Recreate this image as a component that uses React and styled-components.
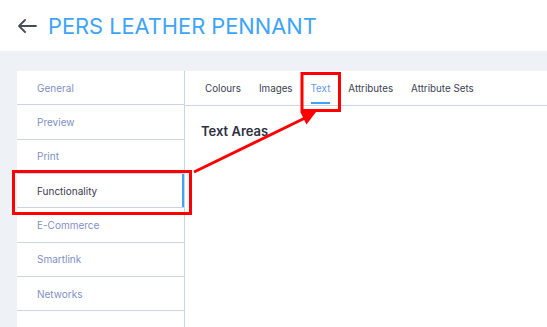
import styled, { createGlobalStyle } from 'styled-components';

const Global = createGlobalStyle`
  html, body { margin: 0; padding: 0; background: #eef1f5; }
  body { font-family: Inter, "Noto Sans", sans-serif; }
`;

const Page = styled.div`
  position: relative;
  width: 547px;
  height: 327px;
  overflow: hidden;
  background: #eef1f5;
`;

const Header = styled.header`
  height: 51px;
  background: #fff;
  display: flex;
  align-items: center;
  padding-left: 17px;
  gap: 11px;
`;

const Title = styled.h1`
  margin: 0;
  font-size: 21.8px;
  font-weight: 400;
  color: #3ea4f8;
`;

const Body = styled.div`
  display: flex;
  padding: 20px 0 0 17px;
  height: 256px;
`;

const Sidebar = styled.nav`
  width: 167px;
  background: #fff;
  border-right: 1px solid #cbd5e2;
  display: flex;
  flex-direction: column;
`;

const NavItem = styled.div`
  height: 33.33px;
  flex-shrink: 0;
  border-bottom: 1px solid #cbd5e2;
  display: flex;
  align-items: center;
  padding-left: 20px;
  font-size: 10px;
  color: ${({ active }) => (active ? '#3c3a4e' : '#7f8fc6')};
  box-shadow: ${({ active }) => (active ? 'inset -2px 0 0 #3ea4f8' : 'none')};
`;

const Content = styled.section`
  flex: 1;
  background: #fff;
`;

const Tabs = styled.div`
  height: 34px;
  border-bottom: 1px solid #cbd5e2;
  display: flex;
  padding-left: 20px;
  gap: 18px;
`;

const Tab = styled.div`
  position: relative;
  display: flex;
  align-items: center;
  font-size: 9.8px;
  color: ${({ active }) => (active ? '#5e9bef' : '#3b4254')};
  &::after {
    content: '';
    display: ${({ active }) => (active ? 'block' : 'none')};
    position: absolute;
    left: 0;
    right: 0;
    bottom: 1px;
    height: 2px;
    background: #3ea4f8;
  }
`;

const Panel = styled.div`
  padding: 17px 16px;
`;

const Heading = styled.h2`
  margin: 0;
  font-size: 13px;
  font-weight: 600;
  color: #2d3142;
`;

const Overlay = styled.svg`
  position: absolute;
  inset: 0;
  pointer-events: none;
`;

const navs = ['General', 'Preview', 'Print', 'Functionality', 'E-Commerce', 'Smartlink', 'Networks'];
const tabs = ['Colours', 'Images', 'Text', 'Attributes', 'Attribute Sets'];

export default function App() {
  return (
    <Page>
      <Global />
      <Header>
        <svg width="20" height="14" viewBox="0 0 20 14">
          <path d="M19 7H2M8 1L2 7l6 6" fill="none" stroke="#474c57" strokeWidth="1.8" strokeLinecap="round" strokeLinejoin="round" />
        </svg>
        <Title>PERS LEATHER PENNANT</Title>
      </Header>
      <Body>
        <Sidebar>
          {navs.map((n) => (
            <NavItem key={n} active={n === 'Functionality'}>{n}</NavItem>
          ))}
        </Sidebar>
        <Content>
          <Tabs>
            {tabs.map((t) => (
              <Tab key={t} active={t === 'Text'}>{t}</Tab>
            ))}
          </Tabs>
          <Panel>
            <Heading>Text Areas</Heading>
          </Panel>
        </Content>
      </Body>
      <Overlay width="547" height="327">
        <rect x="13.5" y="171.5" width="177" height="42" fill="none" stroke="#ff0000" strokeWidth="3" />
        <rect x="302" y="73.5" width="37.5" height="37" fill="none" stroke="#ff0000" strokeWidth="3" />
        <line x1="194" y1="172" x2="305" y2="118" stroke="#ff0000" strokeWidth="3" />
        <polygon points="316,112 306.5,124.5 300.3,111.9" fill="#ff0000" />
      </Overlay>
    </Page>
  );
}
